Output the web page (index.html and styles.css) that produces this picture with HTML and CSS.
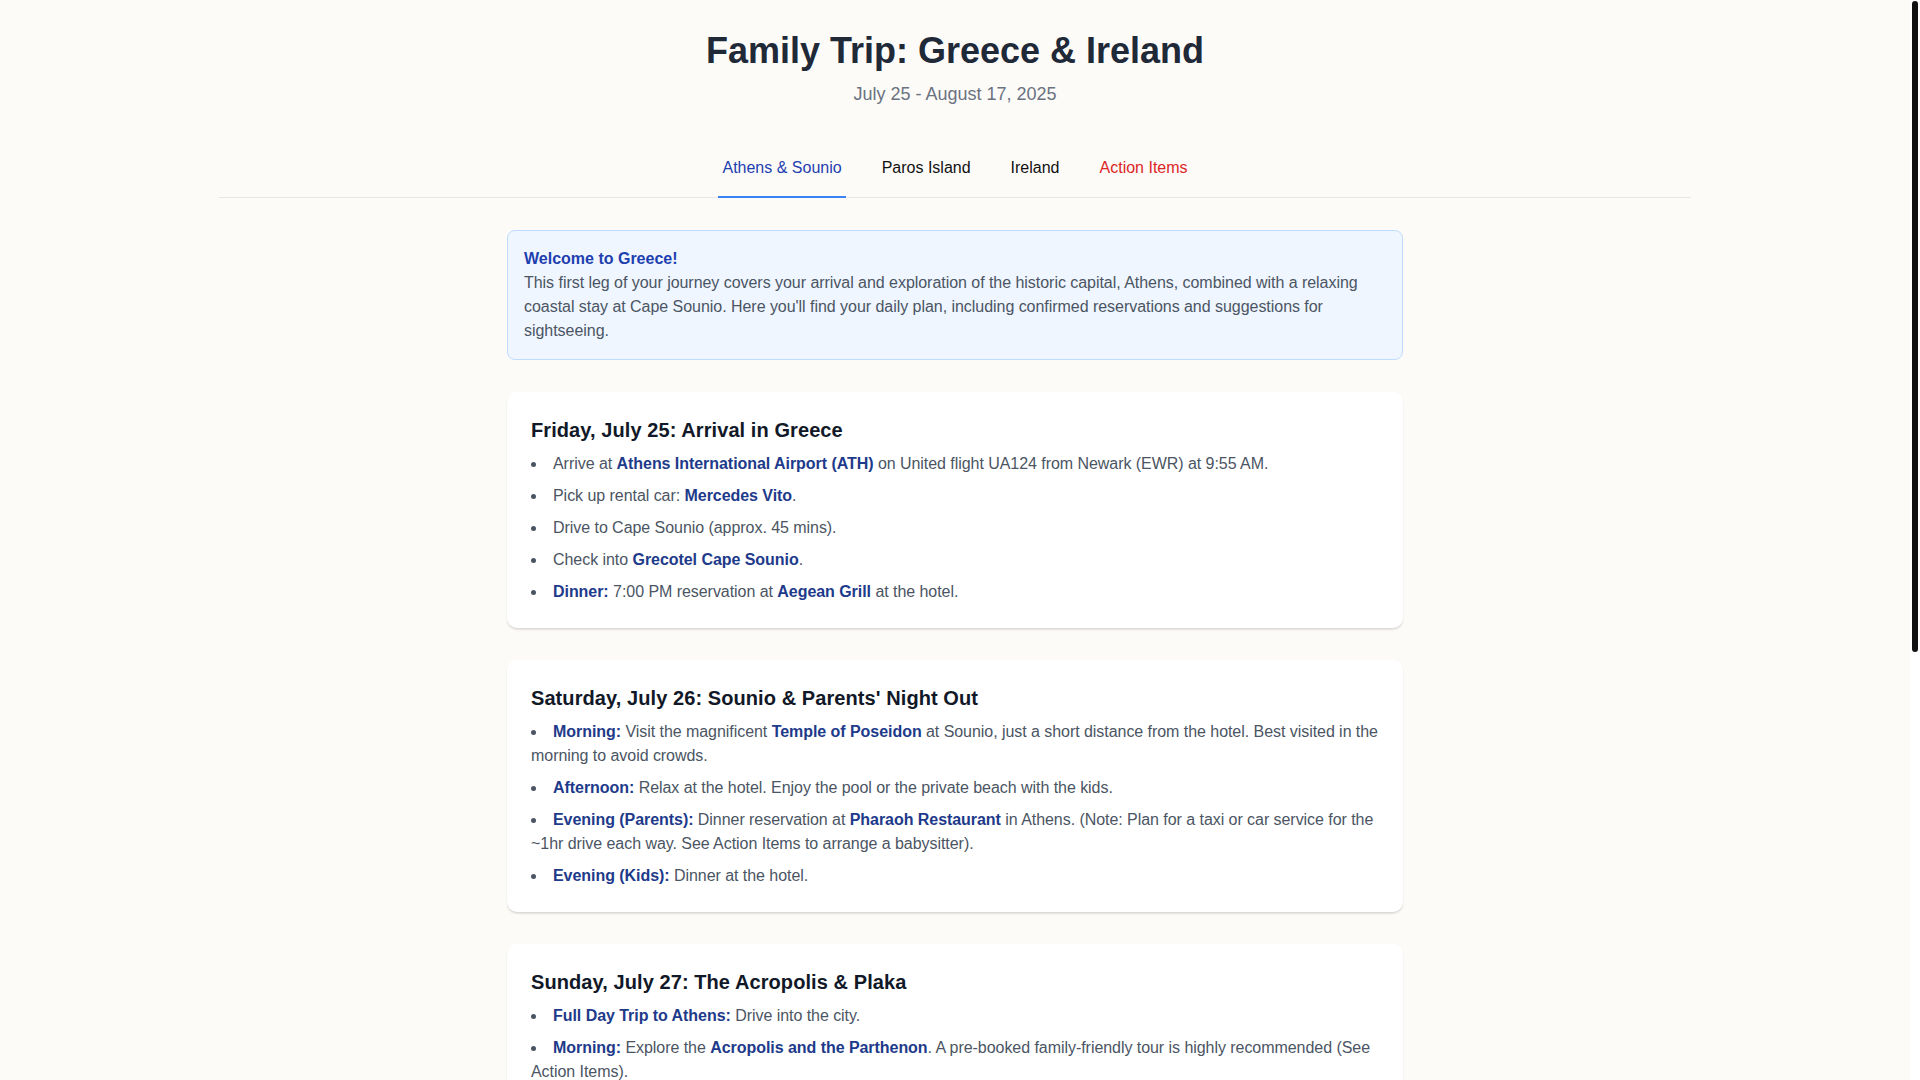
FILE: index.html
```html
<!DOCTYPE html>
<html lang="en">
<head>
<meta charset="utf-8">
<title>Family Trip: Greece &amp; Ireland</title>
<link rel="stylesheet" href="styles.css">
</head>
<body class="app">
<div class="scroller">
<div class="page">
  <header class="header">
    <h1 class="title">Family Trip: Greece &amp; Ireland</h1>
    <p class="subtitle">July 25 - August 17, 2025</p>
  </header>

  <nav class="tabs">
    <button class="tab tab-active">Athens &amp; Sounio</button>
    <button class="tab">Paros Island</button>
    <button class="tab">Ireland</button>
    <button class="tab tab-alert">Action Items</button>
  </nav>

  <main class="content">
    <div class="intro">
      <p class="intro-title">Welcome to Greece!</p>
      <p class="intro-text">This first leg of your journey covers your arrival and exploration of the historic capital, Athens, combined with a relaxing coastal stay at Cape Sounio. Here you'll find your daily plan, including confirmed reservations and suggestions for sightseeing.</p>
    </div>

    <section class="day">
      <h2 class="day-title">Friday, July 25: Arrival in Greece</h2>
      <ul class="items">
        <li>Arrive at <strong>Athens International Airport (ATH)</strong> on United flight UA124 from Newark (EWR) at 9:55 AM.</li>
        <li>Pick up rental car: <strong>Mercedes Vito</strong>.</li>
        <li>Drive to Cape Sounio (approx. 45 mins).</li>
        <li>Check into <strong>Grecotel Cape Sounio</strong>.</li>
        <li><strong>Dinner:</strong> 7:00 PM reservation at <strong>Aegean Grill</strong> at the hotel.</li>
      </ul>
    </section>

    <section class="day">
      <h2 class="day-title">Saturday, July 26: Sounio &amp; Parents' Night Out</h2>
      <ul class="items">
        <li><strong>Morning:</strong> Visit the magnificent <strong>Temple of Poseidon</strong> at Sounio, just a short distance from the hotel. Best visited in the morning to avoid crowds.</li>
        <li><strong>Afternoon:</strong> Relax at the hotel. Enjoy the pool or the private beach with the kids.</li>
        <li><strong>Evening (Parents):</strong> Dinner reservation at <strong>Pharaoh Restaurant</strong> in Athens. (Note: Plan for a taxi or car service for the ~1hr drive each way. See Action Items to arrange a babysitter).</li>
        <li><strong>Evening (Kids):</strong> Dinner at the hotel.</li>
      </ul>
    </section>

    <section class="day">
      <h2 class="day-title">Sunday, July 27: The Acropolis &amp; Plaka</h2>
      <ul class="items">
        <li><strong>Full Day Trip to Athens:</strong> Drive into the city.</li>
        <li><strong>Morning:</strong> Explore the <strong>Acropolis and the Parthenon</strong>. A pre-booked family-friendly tour is highly recommended (See Action Items).</li>
        <li><strong>Lunch:</strong> Enjoy a traditional Greek meal in the charming <strong>Plaka</strong> neighborhood.</li>
        <li><strong>Afternoon:</strong> Visit the <strong>Acropolis Museum</strong>, then wander through the whitewashed lanes of Anafiotika and the busy stalls of the Monastiraki Flea Market before heading back.</li>
        <li><strong>Evening:</strong> Drive back to Sounio.</li>
      </ul>
    </section>

    <section class="day">
      <h2 class="day-title">Monday, July 28: Beach Day at Sounio</h2>
      <ul class="items">
        <li><strong>Morning:</strong> Breakfast at the hotel and a relaxed start to the day.</li>
        <li><strong>Afternoon:</strong> Swim at the hotel's private beach or take a short drive to Legrena Beach.</li>
        <li><strong>Evening:</strong> Sunset drinks overlooking the Temple of Poseidon.</li>
        <li><strong>Dinner:</strong> Casual seaside meal at a taverna in Lavrio.</li>
      </ul>
    </section>

    <section class="day">
      <h2 class="day-title">Tuesday, July 29: Departure to Paros</h2>
      <ul class="items">
        <li>Check out of <strong>Grecotel Cape Sounio</strong>.</li>
        <li>Drive to <strong>Piraeus Port</strong> and return the rental car.</li>
        <li>Take the ferry to Paros.</li>
        <li>See the <strong>Paros Island</strong> tab for the next part of the trip.</li>
      </ul>
    </section>
  </main>
</div>
</div>
<div class="scrollbar"><div class="scrollbar-thumb"></div></div>
</body>
</html>
```

FILE: styles.css
```css
html {
  height: 100%;
  background: #fcfbf8;
}

.app {
  margin: 0;
  height: 100vh;
  overflow: hidden;
  display: flex;
  font-family: "Liberation Sans", Arial, sans-serif;
  font-size: 16px;
  line-height: 24px;
  color: #4b5563;
}

.scroller {
  flex: 1;
  min-width: 0;
  overflow: hidden;
}

.scrollbar {
  width: 10px;
  flex: none;
  background: #ffffff;
  padding: 1px 2px;
  box-sizing: border-box;
}

.scrollbar-thumb {
  height: 651px;
  background: #111111;
  border-radius: 3px;
}

.page {
  max-width: 1536px;
  margin: 0 auto;
  padding: 31px 32px 58px;
  box-sizing: border-box;
}

.header {
  text-align: center;
  margin-bottom: 32px;
}

.title {
  margin: 0;
  font-size: 36px;
  line-height: 40px;
  font-weight: 700;
  color: #1f2937;
}

.subtitle {
  margin: 9px 0 0;
  font-size: 18px;
  line-height: 28px;
  color: #6b7280;
}

.tabs {
  display: flex;
  justify-content: center;
  gap: 32px;
  border-bottom: 1px solid #e5e7eb;
}

.tab {
  font-family: inherit;
  font-size: 16px;
  line-height: 24px;
  background: none;
  border: none;
  border-bottom: 2px solid transparent;
  margin-bottom: -1px;
  padding: 16px 4px 16px;
  color: #111111;
  cursor: pointer;
}

.tab-active {
  color: #1e40af;
  border-bottom-color: #3b82f6;
}

.tab-alert {
  color: #dc2626;
}

.content {
  max-width: 896px;
  margin: 32px auto 0;
}

.intro {
  background: #eff6ff;
  border: 1px solid #bfdbfe;
  border-radius: 8px;
  padding: 16px;
  margin-bottom: 32px;
}

.intro p {
  margin: 0;
}

.intro-title {
  font-weight: 700;
  color: #1e40af;
}

.intro-text {
  color: #4b5563;
  letter-spacing: -0.04px;
}

.day {
  background: #ffffff;
  border-radius: 10px;
  padding: 24px;
  margin-bottom: 32px;
  box-shadow: 0 2px 2px rgba(0, 0, 0, 0.1), 0 1px 1px rgba(0, 0, 0, 0.04);
}

.day-title {
  margin: 0 0 8px;
  font-size: 20px;
  line-height: 28px;
  font-weight: 700;
  letter-spacing: 0.08px;
  color: #111827;
}

.items {
  margin: 0;
  padding: 0;
  list-style: disc inside;
  display: flex;
  flex-direction: column;
  gap: 8px;
  letter-spacing: -0.05px;
}

.items strong {
  color: #1e3a8a;
  font-weight: 700;
}
```
